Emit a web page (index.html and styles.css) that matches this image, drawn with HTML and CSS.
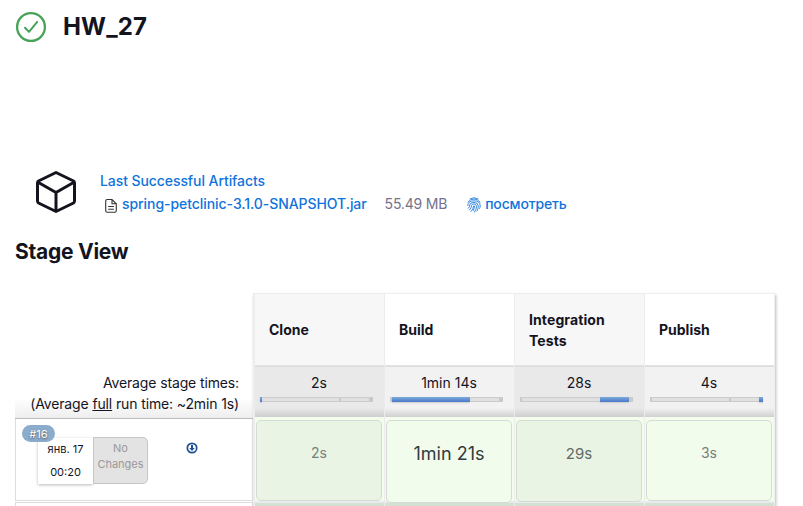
FILE: index.html
```html
<!DOCTYPE html>
<html lang="ru">
<head>
<meta charset="utf-8">
<title>HW_27</title>
<link rel="stylesheet" href="styles.css">
</head>
<body>
<header class="headline">
  <svg class="status" viewBox="0 0 32 32" fill="none" stroke="#46a357"><circle cx="16" cy="16" r="13.9" stroke-width="2.3"/><path d="M10 16.7l4 4.2 8.2-10" stroke-width="2" stroke-linecap="round" stroke-linejoin="round"/></svg>
  <h1>HW_27</h1>
</header>
<section class="artifacts">
  <svg class="cube" viewBox="0 0 42 44" fill="none" stroke="#14141f" stroke-width="3" stroke-linejoin="round"><path d="M21 2.500L38.500 11q1 .6 1 2v18q0 1.300-1 2L21 41.500 3.500 33q-1-.7-1-2V13q0-1.400 1-2zM3 12.200l18 10.300 18-10.300M21 22.500v19"/></svg>
  <div class="artifact-list">
    <a class="artifact-title">Last Successful Artifacts</a>
    <div class="artifact">
      <svg class="file" viewBox="0 0 14 16" fill="none" stroke="#333" stroke-width="1.100"><path d="M8 1.500H3.200Q1.700 1.500 1.700 3v9.700q0 1.500 1.500 1.500h7.600q1.500 0 1.500-1.500V5.800zM8 1.500v4.300h4.300M4.200 8.500h5.700M4.200 11.300h5.700"/></svg>
      <a class="filename">spring-petclinic-3.1.0-SNAPSHOT.jar</a>
      <span class="size">55.49 MB</span>
      <svg class="finger" viewBox="0 0 14 16" fill="none" stroke="#2f86dd" stroke-width=".95" stroke-linecap="round"><path d="M3 1.900Q7-.7 11 1.900M1 5Q3.500 2 7 2t6 3M.8 8.500Q.7 3.900 7 3.800q6.300.1 6.200 5.200 0 1.500-.6 2.500M1.300 11.300Q3 10 2.700 8q.2-2.600 4.300-2.600T11.300 9q0 3-1.300 5M2.500 13Q4.700 11 4.500 8.300 4.700 7 7 7t2.500 2q0 3.500-2 6.200M4 14.500Q6.500 12 6.500 9q.5-.9 1 0 0 2-1.200 4.600"/></svg>
      <a class="look">посмотреть</a>
    </div>
  </div>
</section>
<h2>Stage View</h2>
<main class="pipeline">
  <div class="runs">
    <div class="averages"><span>Average stage times:</span><span class="full-time">(Average <u>full</u> run time: ~2min 1s)</span></div>
    <div class="run">
      <span class="badge">#16</span>
      <div class="run-date"><span>янв. 17</span><span>00:20</span></div>
      <div class="changes">No<br>Changes</div>
      <svg class="download" viewBox="0 0 12 12"><circle cx="6" cy="6" r="4.700" fill="#fff" stroke="#204f91" stroke-width="1.700"/><path d="M5 3h2v3h1.700L6 9 3.300 6H5z" fill="#204f91"/></svg>
    </div>
    <div class="next-run"></div>
  </div>
  <div class="stages">
    <div class="stage odd">
      <div class="name">Clone</div>
      <div class="average"><span>2s</span><div class="bar"><i class="fill clone"></i><i class="mark"></i><i class="mark end"></i></div></div>
      <div class="result"><div class="box">2s</div></div><div class="next"></div>
    </div>
    <div class="stage">
      <div class="name">Build</div>
      <div class="average"><span>1min 14s</span><div class="bar"><i class="mark start"></i><i class="fill build"></i><i class="mark end"></i></div></div>
      <div class="result"><div class="box large">1min 21s</div></div><div class="next"></div>
    </div>
    <div class="stage odd">
      <div class="name two-line">Integration Tests</div>
      <div class="average"><span>28s</span><div class="bar"><i class="mark start"></i><i class="fill tests"></i><i class="mark end"></i></div></div>
      <div class="result"><div class="box medium">29s</div></div><div class="next"></div>
    </div>
    <div class="stage">
      <div class="name">Publish</div>
      <div class="average"><span>4s</span><div class="bar"><i class="mark start"></i><i class="mark"></i><i class="fill publish"></i></div></div>
      <div class="result"><div class="box">3s</div></div><div class="next"></div>
    </div>
  </div>
</main>
</body>
</html>
```
FILE: styles.css
```css
* { box-sizing: border-box; }
body {
  margin: 0;
  height: 506px;
  overflow: hidden;
  background: #fff;
  color: #14141f;
  font: 14px/21px Inter, "Liberation Sans", sans-serif;
}
h1, h2 { margin: 0; font-weight: 700; }
.headline { display: flex; align-items: center; height: 54px; padding-left: 15px; }
.status { width: 32px; height: 32px; margin-right: 16px; }
h1 { font-size: 24px; line-height: 32px; letter-spacing: .15px; }
.artifacts { display: flex; height: 66px; margin-top: 116px; padding-left: 35px; }
.cube { width: 42px; height: 44px; margin-right: 23px; }
.artifact-title { display: block; line-height: 22px; letter-spacing: -.08px; }
a { color: #0f73dc; font-weight: 500; }
.artifact { display: flex; align-items: center; height: 23px; padding-left: 4px; }
.file { width: 14px; height: 16px; margin: 5px 4px 0 0; }
.filename { letter-spacing: -.06px; }
.size { margin: 0 20px 0 18px; color: #73738c; letter-spacing: -.2px; }
.finger { width: 14px; height: 16px; margin-right: 4px; margin-top: 2px; }
.look { letter-spacing: -.15px; }
h2 { height: 57px; padding-left: 15px; font-size: 21px; line-height: 31px; letter-spacing: -.25px; }
.pipeline { display: grid; grid-template-columns: 238px 522px; height: 213px; margin-left: 15px; }
.runs { display: flex; flex-direction: column; }
.averages {
  display: flex; flex-direction: column; justify-content: flex-end; align-items: flex-end;
  height: 126px; padding: 0 14px 4px 0; border-bottom: 1px solid #bbb; letter-spacing: -.13px;
  background: linear-gradient(transparent 105px, #eee);
}
.run { position: relative; display: flex; height: 82px; padding: 19px 0 0 22px; border: 1px solid #ddd; border-top: 0; }
.badge {
  position: absolute; left: 6px; top: 6px; width: 33px; height: 17px; border-radius: 9px;
  background: #8caccc; color: #fff; font-size: 11px; line-height: 18px; text-align: center; text-shadow: 0 1px 2px #555;
}
.run-date { display: flex; flex-direction: column; justify-content: space-between; width: 55px; height: 46px; padding: 1px 0; background: #fff; box-shadow: 0 1px 3px #bbb; font-size: 11px; text-align: center; }
.changes { width: 55px; height: 47px; margin-top: -1px; padding-top: 2px; border: 1px solid #c5c5c5; border-radius: 0 5px 5px 0; background: #e3e3e3; color: #999; font-size: 11px; line-height: 16px; text-align: center; }
.download { width: 12px; height: 12px; margin: 4px 0 0 38px; }
.next-run { height: 4px; margin-top: 1px; border: 1px solid #ddd; border-bottom: 0; }
.stages { display: grid; grid-template-columns: repeat(4, 130px); border: solid #eee; border-width: 1px 1px 0 1px; box-shadow: 1px 2px 3px #bbb; }
.stage { border-left: 1px solid #ececec; }
.name { display: flex; align-items: center; height: 72px; padding: 0 14px 1px; font-weight: 700; border-bottom: 1px solid #e3e3e3; background: #fff; }
.two-line { padding: 1px 14px 0; letter-spacing: .1px; }
.odd .name { background: #f7f7f7; }
.average { height: 51px; padding: 6px 10px 0 5px; border-top: 1px solid #ddd; background: linear-gradient(#f2f2f2 41px, #d0d0d0); text-align: center; }
.average span { display: block; height: 24px; padding-left: 4px; line-height: 20px; }
.odd .average { background: linear-gradient(#e9e9e9 41px, #cecece); }
.bar { display: flex; width: 113px; height: 5px; border: solid #ccc; border-width: 1px 0; background: #e0e0e0; }
.mark { width: 2px; height: 3px; background: #c8c8c8; }
.end { width: 4px; margin-left: auto; }
.fill { height: 5px; margin-top: -1px; background: linear-gradient(#7daad8, #4878ca); box-shadow: 0 1px 2px #ccc; }
.clone { width: 2px; }
.clone + .mark { margin-left: 77px; }
.build { width: 78px; }
.tests { width: 29px; margin-left: 78px; }
.publish { width: 4px; margin-left: auto; }
.start + .mark:not(.end) { margin-left: 77px; }
.result { height: 86px; padding: 3px 2px 0 1px; background: #f2fdeb; border-bottom: 2px solid #e9ecee; }
.box { display: flex; align-items: center; justify-content: center; height: 81px; padding-bottom: 16px; border: 1px solid #d4dbd4; border-radius: 5px; background: #f1fcec; color: #78807a; }
.odd .box { background: #e9f4e4; }
.large { height: 83px; padding-bottom: 16px; color: #333b3f; font-size: 18px; }
.odd .medium { height: 82px; padding-bottom: 16px; color: #626a68; font-size: 15px; }
.next { height: 3px; background: #d4e0d1; }
```
